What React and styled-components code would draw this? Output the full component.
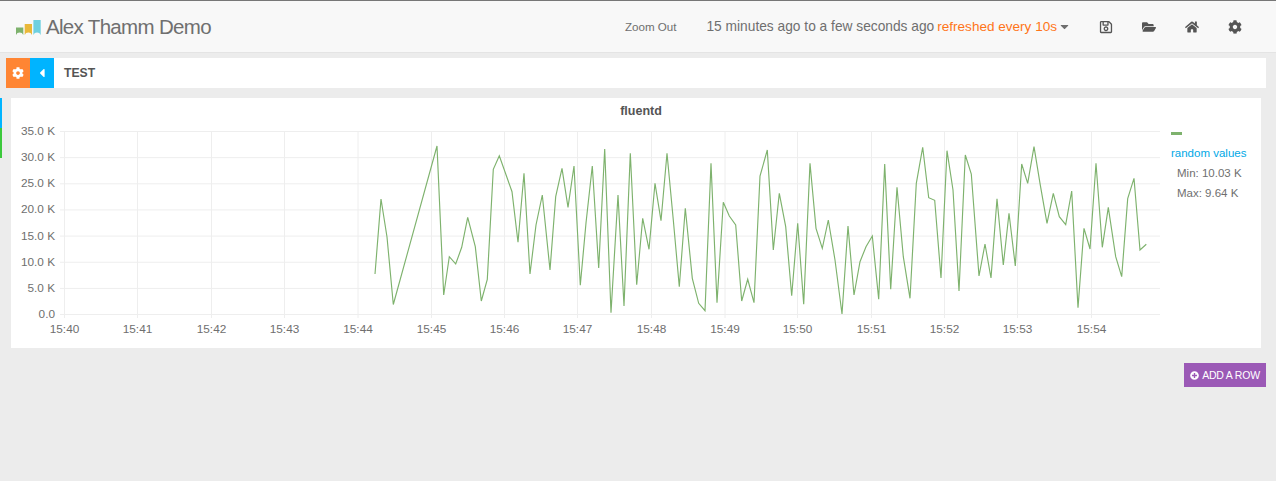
import React from 'react';
import styled, { createGlobalStyle } from 'styled-components';
import { FaRegSave, FaFolderOpen, FaHome, FaCog, FaPlusCircle, FaCaretLeft, FaCaretDown } from 'react-icons/fa';

const Global = createGlobalStyle`
  html, body { margin: 0; padding: 0; background: #ececec; }
  body { font-family: "Liberation Sans", Arial, sans-serif; color: #555; }
`;

const Page = styled.div`
  width: 1276px;
  height: 481px;
  overflow: hidden;
  display: flex;
  flex-direction: column;
`;

const Navbar = styled.header`
  height: 51px;
  box-sizing: content-box;
  border-top: 1px solid #777;
  border-bottom: 1px solid #e4e4e4;
  background: #f8f8f8;
  display: flex;
  align-items: center;
  padding: 0 0 0 16px;
`;

const Brand = styled.div`
  display: flex;
  align-items: center;
  gap: 5px;
  font-size: 20.5px;
  letter-spacing: -0.68px;
  color: #6f6f6f;
  flex: 1;
`;

const LogoMark = styled.svg`
  display: block;
  margin-top: 2px;
`;

const ZoomOut = styled.span`
  font-size: 11.6px;
  color: #6f6f6f;
  margin-right: 30px;
`;

const TimeRange = styled.span`
  font-size: 13.75px;
  color: #6f6f6f;
  display: flex;
  align-items: center;
  margin-right: 28px;
  white-space: pre;
`;

const Refresh = styled.span`
  font-size: 13.55px;
  color: #ff7518;
  margin-left: 3px;
`;

const Caret = styled(FaCaretDown)`
  margin-left: 1px;
`;

const IconGroup = styled.div`
  display: flex;
  align-items: center;
  gap: 29px;
  margin-right: 34px;
  color: #555;
  font-size: 14px;
  svg { display: block; }
`;

const Content = styled.main`
  display: flex;
  flex-direction: column;
  padding: 5px 10px 0 6px;
`;

const RowBar = styled.div`
  height: 30px;
  background: #fff;
  display: flex;
  align-items: stretch;
`;

const RowButton = styled.div`
  width: 24px;
  background: ${p => p.$bg};
  color: #fff;
  font-size: 12px;
  display: flex;
  align-items: center;
  justify-content: center;
`;

const RowTitle = styled.div`
  margin-left: 10px;
  font-size: 12.2px;
  font-weight: 700;
  color: #555;
  align-self: center;
`;

const Row = styled.div`
  margin-top: 10px;
  display: flex;
`;

const Stripes = styled.div`
  width: 2px;
  margin-left: -6px;
  margin-right: 9px;
  display: flex;
  flex-direction: column;
`;

const Stripe = styled.div`
  height: 30px;
  background: ${p => p.$c};
`;

const Panel = styled.section`
  width: 1250px;
  height: 250px;
  margin-right: -5px;
  background: #fff;
  display: flex;
  flex-direction: column;
`;

const PanelTitle = styled.h2`
  margin: 6px 0 0;
  padding-left: 10px;
  height: 15px;
  line-height: 15px;
  text-align: center;
  font-size: 12.5px;
  font-weight: 700;
  color: #555;
`;

const PanelBody = styled.div`
  margin-top: 6px;
  display: flex;
`;

const Chart = styled.svg`
  display: block;
  flex: none;
  text {
    font-family: "Liberation Sans", Arial, sans-serif;
    font-size: 11.8px;
    fill: #6f6f6f;
  }
`;

const Legend = styled.div`
  margin: 7px 0 0 6px;
  font-size: 11.5px;
  color: #6f6f6f;
`;

const Swatch = styled.div`
  width: 11px;
  height: 3px;
  background: #7eb26d;
`;

const SeriesName = styled.div`
  margin-top: 8px;
  line-height: 20px;
  color: #00a8e6;
`;

const Stat = styled.div`
  margin-left: 6px;
  line-height: 20px;
`;

const Footer = styled.div`
  margin-top: 15px;
  display: flex;
  justify-content: flex-end;
`;

const AddRow = styled.button`
  width: 82px;
  height: 24px;
  border: 0;
  padding: 0;
  background: #9b59b6;
  color: #fff;
  font-family: "Liberation Sans", Arial, sans-serif;
  font-size: 10.5px;
  letter-spacing: -0.2px;
  display: flex;
  align-items: center;
  justify-content: center;
  gap: 3px;
`;

const points = [
  [375,274],[381,199],[387,237],[393.3,304.5],[437,146],[443.7,295],[449.3,256.7],[455.7,264],[461.7,247.3],[467.7,217.3],
  [475.3,246.7],[481.3,301],[487.3,279.3],[493.3,169.3],[499.3,155.7],[512,191.7],[518,242.3],[524,173.3],[530,274],[536,225],
  [542.3,195],[550,270],[555.7,196.7],[562,168.3],[568,207.3],[574,166],[580.3,285.3],[586,223],[592.3,166],[598.7,268],
  [604.7,149],[611,312.7],[618,195],[624,306],[630.3,153.3],[636.7,284.7],[642.7,218.3],[649,249.3],[655,183.3],[661,220.7],
  [667,153.3],[673.3,220],[679.3,286.7],[685.3,208.3],[692.3,278.3],[698.7,303.3],[705,310.7],[711,163.3],[717,302.7],[723.3,202.3],
  [729.3,216],[735.7,225],[741.7,301],[747.7,279.3],[754,302.7],[760,176],[767.3,150],[773.3,250],[779.3,193.3],[785.7,226.7],
  [791.7,295.7],[797.7,223.3],[803.7,304.3],[810,163.3],[816,228.3],[822.3,248.3],[828.3,220],[835,260],[842,314],[848,226],
  [854,295],[860,261.7],[866,246.7],[872.3,236],[878.7,299.3],[884.7,164],[890.7,289.3],[897,187.3],[903.3,256.7],[910,298.3],
  [916.3,183.3],[922.7,147.3],[928.7,197.7],[934.7,200.3],[941,278],[947,150.7],[953,190],[959,291],[965.3,155],[971.3,174],
  [979,276],[985,244],[991,278],[997,198.7],[1003.3,265],[1009,213.3],[1015.3,266],[1021.7,164],[1027.7,183.3],[1034,146.7],
  [1040,183.3],[1047,223.3],[1053.3,193.3],[1059.3,216.7],[1065.7,224.7],[1071.7,191],[1078,307.7],[1084,228.3],[1090,249],[1096,163.3],
  [1102.3,247.3],[1108.3,207.3],[1115.7,256.7],[1121.7,276.7],[1127.7,198.7],[1134,178.3],[1140,250],[1146.3,244.3],
];

const yTicks = ['35.0 K','30.0 K','25.0 K','20.0 K','15.0 K','10.0 K','5.0 K','0.0'];
const xTicks = [64.5,137.5,211.5,284.5,358,431.5,504.5,577.5,651.5,725,797.5,871.5,944.5,1017.5,1091.5];

const Logo = () => (
  <LogoMark width="25" height="15" viewBox="0 0 25 15">
    <path d="M0 7.5h7.3V15q-1-2.4-3.65-2.4T0 15z" fill="#7eb26d" />
    <path d="M8.7 4H16V15q-1-2.4-3.65-2.4T8.7 15z" fill="#eab839" />
    <path d="M17.4 0h7.3V15q-1-2.4-3.65-2.4T17.4 15z" fill="#6ed0e0" />
  </LogoMark>
);

export default function App() {
  return (
    <Page>
      <Global />
      <Navbar>
        <Brand><Logo />Alex Thamm Demo</Brand>
        <ZoomOut>Zoom Out</ZoomOut>
        <TimeRange>15 minutes ago to a few seconds ago<Refresh>refreshed every 10s</Refresh><Caret size={13} /></TimeRange>
        <IconGroup>
          <FaRegSave />
          <FaFolderOpen />
          <FaHome />
          <FaCog />
        </IconGroup>
      </Navbar>
      <Content>
        <RowBar>
          <RowButton $bg="#ff8533"><FaCog /></RowButton>
          <RowButton $bg="#00b4ff"><FaCaretLeft size={14} /></RowButton>
          <RowTitle>TEST</RowTitle>
        </RowBar>
        <Row>
          <Stripes>
            <Stripe $c="#00b4ff" />
            <Stripe $c="#3cc93c" />
          </Stripes>
          <Panel>
            <PanelTitle>fluentd</PanelTitle>
            <PanelBody>
              <Chart width="1154" height="223" viewBox="11 125 1154 223">
                {yTicks.map((t, i) => {
                  const y = 131.5 + i * 26.15;
                  return (
                    <g key={t}>
                      <line x1="60" x2="1160" y1={y} y2={y} stroke="#eee" />
                      <text x="55" y={y + 3.5} textAnchor="end">{t}</text>
                    </g>
                  );
                })}
                {xTicks.map((x, i) => {
                  const m = String(40 + i);
                  return (
                    <g key={m}>
                      <line x1={x} x2={x} y1="131" y2="318" stroke="#eee" />
                      <text x={x} y="333" textAnchor="middle">{`15:${m}`}</text>
                    </g>
                  );
                })}
                <polyline
                  points={points.map(p => p.join(',')).join(' ')}
                  fill="none"
                  stroke="#7eb26d"
                  strokeWidth="1.15"
                  strokeLinejoin="miter"
                />
              </Chart>
              <Legend>
                <Swatch />
                <SeriesName>random values</SeriesName>
                <Stat>Min: 10.03 K</Stat>
                <Stat>Max: 9.64 K</Stat>
              </Legend>
            </PanelBody>
          </Panel>
        </Row>
        <Footer>
          <AddRow><FaPlusCircle size={9} />ADD A ROW</AddRow>
        </Footer>
      </Content>
    </Page>
  );
}
